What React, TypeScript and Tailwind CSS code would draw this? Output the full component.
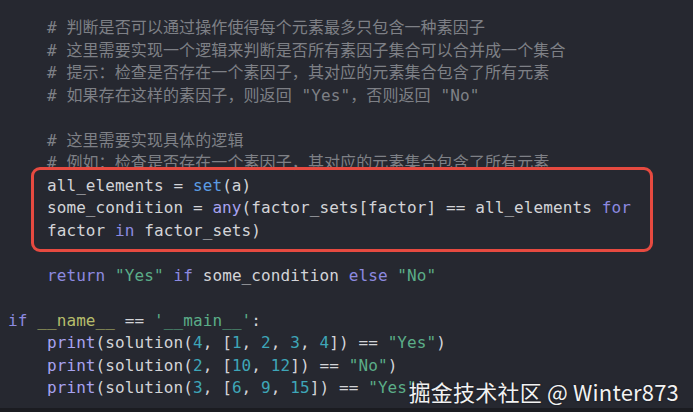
const C = {
  txt: "text-[#d3d4d8]",
  kw: "text-[#8d8ae0]",
  bi: "text-[#5c9de4]",
  fn: "text-[#a8a3f0]",
  str: "text-[#5bad88]",
  num: "text-[#3ea6b8]",
  dun: "text-[#b6bd6c]",
  com: "text-[#7e8086]",
};

type Tok = [string, string];

const lines: Tok[][] = [
  [["    # 判断是否可以通过操作使得每个元素最多只包含一种素因子", C.com]],
  [["    # 这里需要实现一个逻辑来判断是否所有素因子集合可以合并成一个集合", C.com]],
  [["    # 提示：检查是否存在一个素因子，其对应的元素集合包含了所有元素", C.com]],
  [["    # 如果存在这样的素因子，则返回 \"Yes\"，否则返回 \"No\"", C.com]],
  [],
  [["    # 这里需要实现具体的逻辑", C.com]],
  [["    # 例如：检查是否存在一个素因子，其对应的元素集合包含了所有元素", C.com]],
  [["    all_elements = ", C.txt], ["set", C.bi], ["(a)", C.txt]],
  [
    ["    some_condition = ", C.txt],
    ["any", C.fn],
    ["(factor_sets[factor] == all_elements ", C.txt],
    ["for", C.kw],
  ],
  [["    factor ", C.txt], ["in", C.kw], [" factor_sets)", C.txt]],
  [],
  [
    ["    ", C.txt],
    ["return", C.kw],
    [" ", C.txt],
    ["\"Yes\"", C.str],
    [" ", C.txt],
    ["if", C.kw],
    [" some_condition ", C.txt],
    ["else", C.kw],
    [" ", C.txt],
    ["\"No\"", C.str],
  ],
  [],
  [["if", C.kw], [" ", C.txt], ["__name__", C.dun], [" == ", C.txt], ["'__main__'", C.str], [":", C.txt]],
  [
    ["    ", C.txt], ["print", C.fn], ["(solution(", C.txt], ["4", C.num], [", [", C.txt],
    ["1", C.num], [", ", C.txt], ["2", C.num], [", ", C.txt], ["3", C.num], [", ", C.txt], ["4", C.num],
    ["]) == ", C.txt], ["\"Yes\"", C.str], [")", C.txt],
  ],
  [
    ["    ", C.txt], ["print", C.fn], ["(solution(", C.txt], ["2", C.num], [", [", C.txt],
    ["10", C.num], [", ", C.txt], ["12", C.num], ["]) == ", C.txt], ["\"No\"", C.str], [")", C.txt],
  ],
  [
    ["    ", C.txt], ["print", C.fn], ["(solution(", C.txt], ["3", C.num], [", [", C.txt],
    ["6", C.num], [", ", C.txt], ["9", C.num], [", ", C.txt], ["15", C.num],
    ["]) == ", C.txt], ["\"Yes\"", C.str], [")", C.txt],
  ],
];

const App = () => {
  return (
    <div className="w-[693px] h-[412px] bg-[#262830] overflow-hidden flex flex-col">
      <div className="relative h-[408px] pt-[17px] pl-[8px] font-['DejaVu_Sans_Mono','Noto_Sans_CJK_SC',monospace] text-[16px] leading-[22.5px] tracking-[0.1px]">
        {lines.map((toks, i) => (
          <div key={i} className="h-[22.5px] whitespace-pre">
            {toks.map(([t, c], j) => (
              <span key={j} className={c}>
                {t}
              </span>
            ))}
          </div>
        ))}

        {/* highlight box */}
        <div className="absolute left-[31px] top-[167px] w-[622px] h-[85px] border-[3px] border-[#e64a40] rounded-[9px]"></div>

        {/* watermark */}
        <div className="absolute right-[14px] bottom-[6px] font-['Noto_Sans_CJK_SC',sans-serif] text-[22px] leading-none tracking-[0.2px] text-[#f2f2f2] [text-shadow:0_0_2px_rgba(0,0,0,0.5)]">
          掘金技术社区 @ Winter873
        </div>
      </div>
      <div className="h-[4px] bg-[#1b1c21]"></div>
    </div>
  );
};

export default App;
